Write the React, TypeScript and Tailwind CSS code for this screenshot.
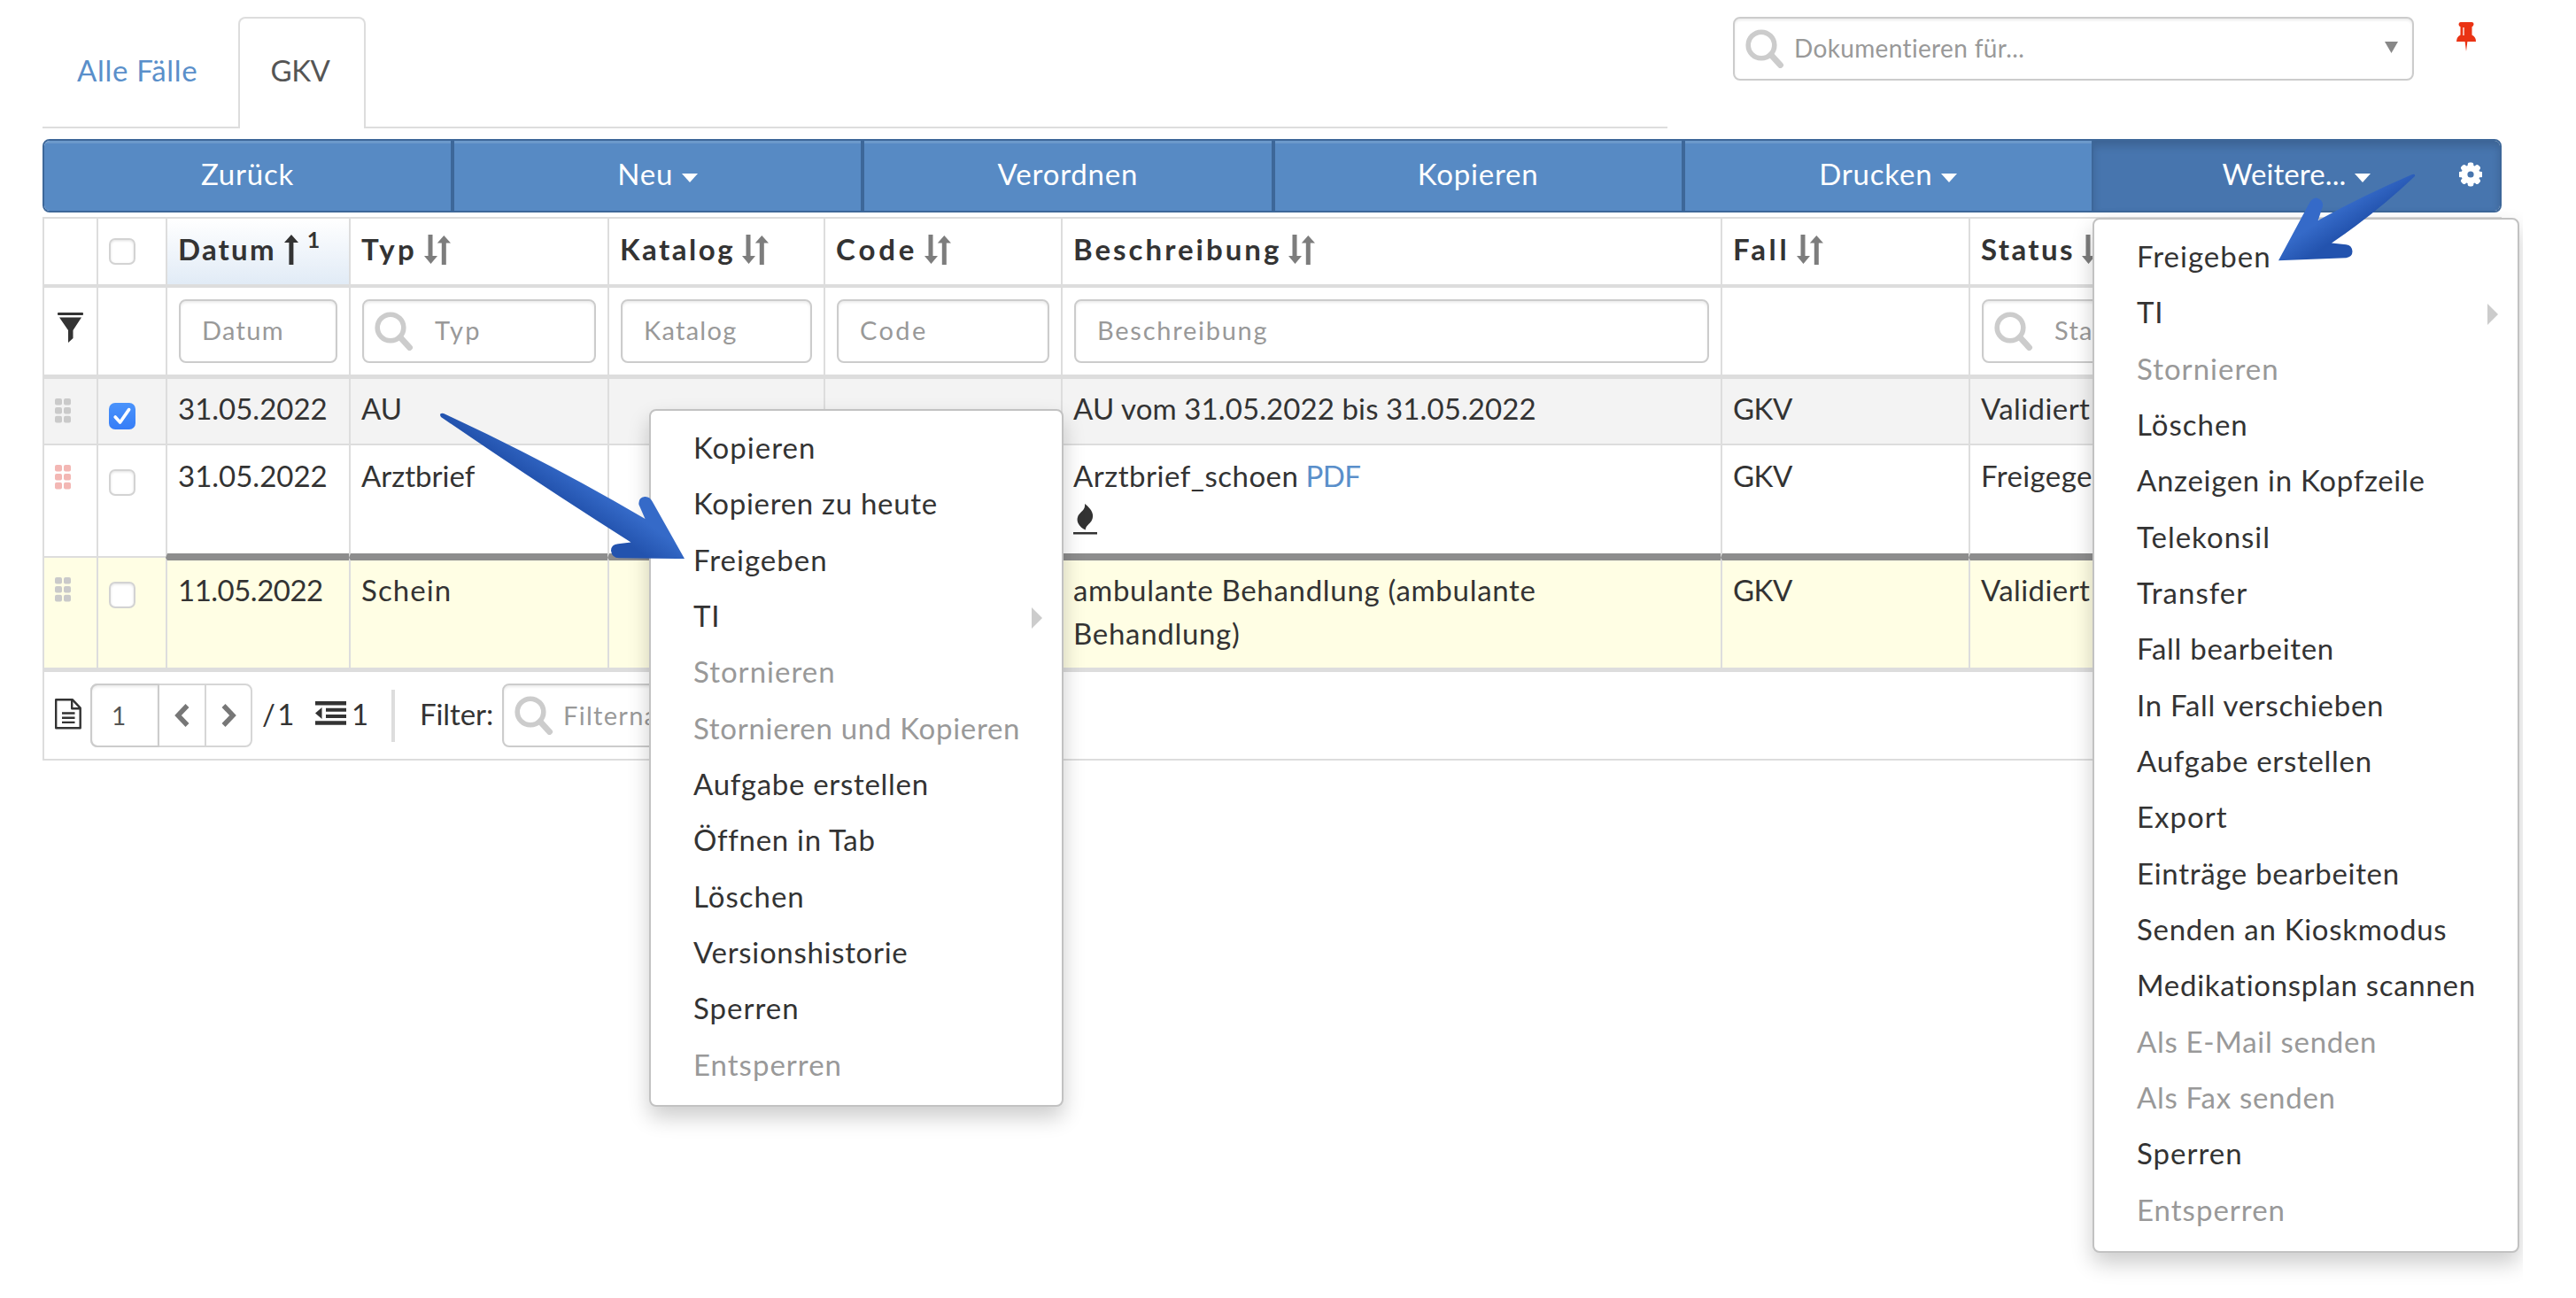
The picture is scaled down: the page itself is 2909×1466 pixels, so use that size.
import { useState } from "react";
import clsx from "clsx";

type MenuItem = { label: string; disabled?: boolean; submenu?: boolean };
type Column = { label: string; tracking: string; filter?: "text" | "search"; sorted?: boolean; filterTracking?: string };
type Row = { datum: string; typ: string; beschreibung: string; pdf?: boolean; fall: string; status: string; alert?: boolean; tone: string; height: string };

const COLUMNS: Column[] = [
  { label: "Datum", tracking: "tracking-[2.2px]", filter: "text", sorted: true, filterTracking: "tracking-[1.3px]" },
  { label: "Typ", tracking: "tracking-[3.3px]", filter: "search", filterTracking: "tracking-[2.4px]" },
  { label: "Katalog", tracking: "tracking-[2.5px]", filter: "text", filterTracking: "tracking-[1.3px]" },
  { label: "Code", tracking: "tracking-[3.9px]", filter: "text", filterTracking: "tracking-[2.4px]" },
  { label: "Beschreibung", tracking: "tracking-[3px]", filter: "text", filterTracking: "tracking-[1.75px]" },
  { label: "Fall", tracking: "tracking-[3.7px]" },
  { label: "Status", tracking: "tracking-[2.4px]", filter: "search", filterTracking: "tracking-[1.3px]" },
];

const ROWS: Row[] = [
  { datum: "31.05.2022", typ: "AU", beschreibung: "AU vom 31.05.2022 bis 31.05.2022", fall: "GKV", status: "Validiert", tone: "bg-[#f3f3f3]", height: "h-[75px]" },
  { datum: "31.05.2022", typ: "Arztbrief", beschreibung: "Arztbrief_schoen", pdf: true, fall: "GKV", status: "Freigegeben", alert: true, tone: "bg-white", height: "h-[127px]" },
  { datum: "11.05.2022", typ: "Schein", beschreibung: "ambulante Behandlung (ambulante Behandlung)", fall: "GKV", status: "Validiert", tone: "bg-[#fffee4]", height: "h-[129px]" },
];

const CONTEXT_MENU: MenuItem[] = [
  { label: "Kopieren" },
  { label: "Kopieren zu heute" },
  { label: "Freigeben" },
  { label: "TI", submenu: true },
  { label: "Stornieren", disabled: true },
  { label: "Stornieren und Kopieren", disabled: true },
  { label: "Aufgabe erstellen" },
  { label: "Öffnen in Tab" },
  { label: "Löschen" },
  { label: "Versionshistorie" },
  { label: "Sperren" },
  { label: "Entsperren", disabled: true },
];

const MORE_MENU: MenuItem[] = [
  { label: "Freigeben" },
  { label: "TI", submenu: true },
  { label: "Stornieren", disabled: true },
  { label: "Löschen" },
  { label: "Anzeigen in Kopfzeile" },
  { label: "Telekonsil" },
  { label: "Transfer" },
  { label: "Fall bearbeiten" },
  { label: "In Fall verschieben" },
  { label: "Aufgabe erstellen" },
  { label: "Export" },
  { label: "Einträge bearbeiten" },
  { label: "Senden an Kioskmodus" },
  { label: "Medikationsplan scannen" },
  { label: "Als E-Mail senden", disabled: true },
  { label: "Als Fax senden", disabled: true },
  { label: "Sperren" },
  { label: "Entsperren", disabled: true },
];

const ACTIONS = [
  { label: "Zurück", caret: false },
  { label: "Neu", caret: true },
  { label: "Verordnen", caret: false },
  { label: "Kopieren", caret: false },
  { label: "Drucken", caret: true },
  { label: "Weitere...", caret: true },
];

const GRID = "grid grid-cols-[61px_78px_207px_292px_244px_268px_745px_280px_602px]";
const INPUT = "flex items-center h-[72px] border-2 border-[#ccc] rounded-lg bg-white shadow-[inset_0_2px_3px_rgba(0,0,0,0.08)] text-[29px] text-[#999]";

function SearchIcon() {
  return (
    <svg width="44" height="44" viewBox="0 0 44 44" fill="none" stroke="#ccc" className="shrink-0">
      <circle cx="18" cy="18" r="14.8" strokeWidth="5.6" />
      <path d="M29 29l10.5 11.5" strokeWidth="7" strokeLinecap="round" />
    </svg>
  );
}

function SortIcon() {
  return (
    <svg width="30" height="34" viewBox="0 0 30 34" fill="#7d7d7d" className="shrink-0">
      <path d="M4.5 0h5v24H15L7.5 33 0 24h4.5z" />
      <path d="M19.8 34h5V9.5H30L22.3 1l-7.5 8.5h5z" />
    </svg>
  );
}

function Caret() {
  return (
    <svg width="18" height="10" viewBox="0 0 18 10" fill="#fff">
      <path d="M0 0h18L9 10z" />
    </svg>
  );
}

function Gear() {
  return (
    <svg width="26" height="28" viewBox="-13 -14 26 28" fill="#fff">
      {[0, 45, 90, 135].map(a => (
        <rect key={a} x="-3.3" y="-13.6" width="6.6" height="27.2" rx="2.4" transform={`rotate(${a})`} />
      ))}
      <circle r="10.6" />
      <circle r="3.6" fill="#4775ae" />
    </svg>
  );
}

function Handle({ alert }: { alert?: boolean }) {
  return (
    <svg width="18" height="28" viewBox="0 0 18 28" className={alert ? "fill-[#f3b7b4]" : "fill-[#cacaca]"}>
      {[0, 10, 19.8].map(y => (
        <g key={y}>
          <rect x="0" y={y} width="8" height="7.6" rx="2" />
          <rect x="10" y={y} width="8" height="7.6" rx="2" />
        </g>
      ))}
    </svg>
  );
}

function Checkbox({ checked, onClick }: { checked?: boolean; onClick?: () => void }) {
  return (
    <button onClick={onClick}
      className={clsx("flex items-center justify-center w-[30px] h-[30px] rounded-[7px]",
        checked ? "bg-linear-to-b from-[#4a93fb] to-[#367df7]" : "bg-white border-2 border-[#d3d3d3] shadow-[inset_0_1px_3px_rgba(0,0,0,0.12)]")}>
      {checked && (
        <svg width="20" height="20" viewBox="0 0 20 20" fill="none" stroke="#fff" strokeWidth="3.6" strokeLinecap="round" strokeLinejoin="round">
          <path d="M2.2 11l5.4 6L17.6 2.6" />
        </svg>
      )}
    </button>
  );
}

function Menu({ items, className }: { items: MenuItem[]; className: string }) {
  return (
    <ul className={clsx("absolute bg-white border-2 border-[#c2c2c2] rounded-lg pt-[10px] shadow-[0_12px_24px_rgba(0,0,0,0.2)]", className)}>
      {items.map(item => (
        <li key={item.label}
          className={clsx("flex items-center justify-between h-[63.34px] pl-[48px] pr-[22px] whitespace-nowrap",
            item.label.length < 12 && item.label.length > 2 ? "tracking-[1px]" : "tracking-[0.7px]",
            item.disabled ? "text-[#999]" : "text-[#333]")}>
          {item.label}
          {item.submenu && (
            <svg width="12" height="24" viewBox="0 0 12 24" fill="#ccc" className="mt-1">
              <path d="M0 0l12 12L0 24z" />
            </svg>
          )}
        </li>
      ))}
    </ul>
  );
}

export default function App() {
  const [selected, setSelected] = useState<number[]>([0]);
  const toggle = (i: number) => setSelected(s => (s.includes(i) ? s.filter(x => x !== i) : [...s, i]));

  return (
    <div className="relative w-[2849px] h-[1466px] overflow-hidden bg-white pl-12 text-[33px] leading-[49px] text-[#333] font-[Lato,'Open_Sans',sans-serif]">
      {/* Tabs + search */}
      <div className="flex h-[157px]">
        <div className="flex items-end w-[1835px] h-[145px] border-b-2 border-[#ddd] tracking-[0.7px]">
          <a className="w-[221px] pl-[39px] pb-[39px] text-[#5a8fca]">Alle Fälle</a>
          <div className="flex justify-center w-[144px] h-[126px] -mb-[2px] pt-[34px] pr-1 border-2 border-b-0 border-[#ddd] rounded-t-lg bg-white text-[#555] tracking-[-0.5px]">
            GKV
          </div>
        </div>
        <div className={clsx(INPUT, "w-[769px] ml-[74px] mt-[19px] pl-3 pr-4 justify-between")}>
          <div className="flex items-center">
            <SearchIcon />
            <span className="pl-[11px] pb-0.5 text-[28px] tracking-[0.35px]">Dokumentieren für...</span>
          </div>
          <svg width="15" height="13" viewBox="0 0 15 13" fill="#888" className="mb-1">
            <path d="M0 0h15L7.5 13z" />
          </svg>
        </div>
        <svg width="22" height="33" viewBox="0 0 22 33" fill="#ea3314" className="ml-[48px] mt-[25px]">
          <path d="M4.5 0h13q2.300 .3 2 2.600t-2 2.600v9.300q4.500 2 4.500 7.500H12.400L11 33 9.600 22H0q0-5.500 4.500-7.500V5.200q-2-.3-2-2.600T4.500 0z" />
          <path d="M8 6v9" stroke="#fff" strokeWidth="1.300" />
        </svg>
      </div>

      {/* Toolbar */}
      <div className="flex w-[2777px] h-[83px] border-2 border-[#3d6799] rounded-lg overflow-hidden text-white [text-shadow:0_-2px_0_rgba(0,0,0,0.2)]">
        {ACTIONS.map(({ label, caret }, i) => (
          <button key={label}
            className={clsx("relative flex flex-1 items-center justify-center gap-2.5 pb-1",
              i > 0 && "border-l-2 border-[#3d6799]",
              i < 4 && "border-r-2",
              i < 5 ? "tracking-[0.8px] bg-[#578ac4] border-[#3d6799] shadow-[inset_0_3px_0_rgba(255,255,255,0.13)]"
                    : "tracking-[0.1px] bg-[#4775ae] shadow-[inset_0_6px_10px_rgba(0,0,0,0.15)]")}>
            {label}
            {caret && <span className="pt-2"><Caret /></span>}
            {i === 5 && <span className="absolute right-[20px] top-[24px]"><Gear /></span>}
          </button>
        ))}
      </div>

      {/* Entries table */}
      <div className="w-[2777px] mt-[5px] border-t-2 border-r-2 border-[#ddd]">
        <div className={clsx(GRID, "h-[78px] border-b-4 border-[#ddd] font-bold")}>
          <div className="border-l-2 border-[#ddd]" />
          <div className="border-l-2 border-[#ddd] pt-[22px] pl-[12px]"><Checkbox /></div>
          {COLUMNS.map(col => (
            <div key={col.label}
              className={clsx("flex items-start border-l-2 border-[#ddd] pl-[12px] pt-[10px]", col.sorted && "bg-linear-to-b from-white to-[#e1ebf6]")}>
              <span className={col.tracking}>{col.label}</span>
              {col.sorted ? (
                <>
                  <svg width="16" height="34" viewBox="0 0 16 34" fill="#333" className="ml-[9px] mt-2">
                    <path d="M5.400 34h5V9H16L8 0 0 9h5.400z" />
                  </svg>
                  <span className="ml-2.5 -mt-[11px] text-[25px]">1</span>
                </>
              ) : (
                <span className="ml-[8px] mt-2"><SortIcon /></span>
              )}
            </div>
          ))}
        </div>

        <div className={clsx(GRID, "h-[103px] border-b-[5px] border-[#ddd]")}>
          <div className="border-l-2 border-[#ddd] pl-[15px] pt-[28px]">
            <svg width="29" height="34" viewBox="0 0 29 34" fill="#333">
              <rect width="29" height="3" rx="1" />
              <path d="M2 5.500h25L17.500 20v9L12 34V20z" />
            </svg>
          </div>
          <div className="border-l-2 border-[#ddd]" />
          {COLUMNS.map(col => (
            <div key={col.label} className="border-l-2 border-[#ddd] px-[13px] pt-[13px]">
              {col.filter && (
                <div className={clsx(INPUT, col.filter === "search" ? "pl-3" : "pl-[24px]")}>
                  {col.filter === "search" && <span className="mr-6"><SearchIcon /></span>}
                  <span className={clsx("pb-[3px]", col.filterTracking)}>{col.label}</span>
                </div>
              )}
            </div>
          ))}
        </div>

        {ROWS.map((row, i) => {
          const last = i === ROWS.length - 1;
          const line = last ? "border-b-[5px] border-b-[#ddd]" : "border-b-2 border-b-[#ddd]";
          // a new day starts below row 1, marked by a heavy rule
          const cell = clsx("border-l-2 border-l-[#ddd] px-[12px]",
            i === 1 ? "border-b-[5px] border-b-[#8d8d8d] pt-[10px]" : line,
            i === 0 && "pt-[9px]",
            last && "border-t-[3px] border-t-[#8d8d8d] pt-[9px]");
          return (
            <div key={i} className={clsx(GRID, row.tone, row.height)}>
              <div className={clsx("border-l-2 border-l-[#ddd] pl-3 pt-[22px]", line)}><Handle alert={row.alert} /></div>
              <div className={clsx("border-l-2 border-l-[#ddd] pl-3 pt-[27px]", line)}>
                <Checkbox checked={selected.includes(i)} onClick={() => toggle(i)} />
              </div>
              <div className={clsx(cell, last ? "tracking-[-0.5px]" : "tracking-normal")}>{row.datum}</div>
              <div className={clsx(cell, last ? "tracking-[1.1px]" : "tracking-normal")}>{row.typ}</div>
              <div className={cell} />
              <div className={cell} />
              <div className={cell}>
                <div className={clsx("w-[560px]", last ? "tracking-[0.7px]" : i === 0 ? "tracking-[0.1px]" : "tracking-[0.5px]")}>
                  {row.beschreibung}
                  {row.pdf && <a className="text-[#5a8fca] tracking-[-0.5px]"> PDF</a>}
                </div>
                {row.pdf && (
                  <svg width="27" height="35" viewBox="0 0 27 35" fill="#333" className="mt-[7px]">
                    <path d="M13 0C21 6 24.500 13 20.500 19.500C18 23 14 25 13.800 29.500C7 26.500 2.500 20 5.500 13.500C8 9 14 7 13 0z" />
                    <rect y="32" width="27" height="2.500" />
                  </svg>
                )}
              </div>
              <div className={clsx(cell, "tracking-[-0.5px]")}>{row.fall}</div>
              <div className={clsx(cell, "tracking-[0.4px]")}>{row.status}</div>
            </div>
          );
        })}

        {/* Pager */}
        <div className="flex items-center h-[100px] border-l-2 border-b-2 border-[#ddd] pl-3">
          <svg width="30" height="35" viewBox="0 0 30 35" fill="none" stroke="#333" strokeWidth="2.400" strokeLinejoin="round" className="-mt-1">
            <path d="M1.200 1.200h18.500l9 9.500v22.600H1.200z" />
            <path d="M19.200 1.200v10h9.500" />
            <path d="M8 16.500h14.500M8 21.700h14.500M8 26.900h14.500" />
          </svg>
          <div className="flex ml-[10px] h-[72px] border-2 border-[#d6d6d6] rounded-lg">
            <div className="w-[78px] -my-[2px] -ml-[2px] flex items-center pl-[22px] border-2 border-[#ccc] rounded-l-lg shadow-[inset_0_2px_3px_rgba(0,0,0,0.08)] text-[28px] text-[#555]">1</div>
            <div className="w-[51px] flex items-center justify-center">
              <svg width="17" height="26" viewBox="0 0 17 26" fill="none" stroke="#777" strokeWidth="5.500"><path d="M14.500 2L4 13l10.500 11" /></svg>
            </div>
            <div className="w-[52px] flex items-center justify-center border-l-2 border-[#d6d6d6]">
              <svg width="17" height="26" viewBox="0 0 17 26" fill="none" stroke="#777" strokeWidth="5.500"><path d="M2.500 2L13 13 2.500 24" /></svg>
            </div>
          </div>
          <span className="ml-[11px] w-[60px] pb-1 [word-spacing:-6px]">/ 1</span>
          <svg width="35" height="27" viewBox="0 0 35 27" fill="#333" className="-mt-1.5">
            <path d="M0 0h35v4.500H0zM12 7.700h23v4H12zM12 15h23v4H12zM0 22.300h35v4.500H0zM7.500 7v13L0 13.500z" />
          </svg>
          <span className="ml-[6px] w-[20px] pb-1">1</span>
          <div className="ml-[25px] w-1 h-[59px] bg-[#ddd]" />
          <span className="ml-[28px] w-[93px] pb-1 tracking-[-0.1px]">Filter:</span>
          <div className={clsx(INPUT, "w-[420px] pl-3")}>
            <SearchIcon />
            <span className="pl-[11px] pb-0.5 tracking-[1.3px]">Filtername</span>
          </div>
        </div>
      </div>

      <Menu items={CONTEXT_MENU} className="left-[733px] top-[462px] w-[468px] pb-[14px]" />
      <Menu items={MORE_MENU} className="left-[2363px] top-[246px] w-[482px] pb-[15px]" />

      {/* Pointer arrows over both "Freigeben" entries */}
      <svg className="absolute left-0 top-0 pointer-events-none" width="2849" height="700" viewBox="0 0 2849 700">
        <defs>
          <linearGradient id="arrowLeft" gradientUnits="userSpaceOnUse" x1="706" y1="574" x2="688" y2="600">
            <stop offset="0" stopColor="#356ac8" />
            <stop offset="1" stopColor="#2353ae" />
          </linearGradient>
          <linearGradient id="arrowRight" gradientUnits="userSpaceOnUse" x1="2630" y1="243" x2="2645" y2="266">
            <stop offset="0" stopColor="#356ac8" />
            <stop offset="1" stopColor="#2353ae" />
          </linearGradient>
        </defs>
        <path fill="url(#arrowLeft)" d="M498 471Q495 466 501 467Q616 520 728.500 586L721.500 570Q720.500 562 728 561Q734 560.500 737 567L773 631L699 630.300Q691 630 690 622Q690 615 698 614.300L712.500 612.500Q606 545 498 471z" />
        <path fill="url(#arrowRight)" d="M2727 199Q2728 196 2724 197Q2668 221 2617.700 249L2623 233Q2624 226 2616 223.500Q2611 223 2607.500 230L2573 294.300L2649.500 291.300Q2656.500 290 2656.500 284Q2656 277 2649.500 276.300L2633 274.500Q2684 240 2727 199z" />
      </svg>
    </div>
  );
}
